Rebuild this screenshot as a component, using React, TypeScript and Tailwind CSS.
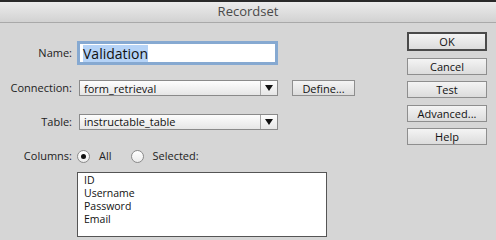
import React from "react";

const font = { fontFamily: '"Open Sans", "DejaVu Sans", sans-serif' };

function Select({ value }: { value: string }) {
  return (
    <div className="flex h-[16px] w-[199px] items-stretch border border-[#8a8a8a] bg-gradient-to-b from-[#fdfdfd] to-[#e6e6e6] text-[11px] leading-none text-[#111]">
      <div className="flex flex-1 items-center pl-[4px]">{value}</div>
      <div className="flex w-[17px] items-center justify-center border-l border-[#a8a8a8]">
        <svg width="8" height="6" viewBox="0 0 8 6"><path d="M0 0H8L4 6Z" fill="#111" /></svg>
      </div>
    </div>
  );
}

function Btn({ label, def }: { label: string; def?: boolean }) {
  return (
    <div
      className={
        "flex items-center justify-center bg-gradient-to-b from-[#f4f4f4] to-[#dcdcdc] text-[11px] leading-none text-[#111] " +
        (def ? "h-[19px] border-2 border-[#4a4a4a]" : "h-[17px] border border-[#8e8e8e]")
      }
    >
      {label}
    </div>
  );
}

function Radio({ on }: { on?: boolean }) {
  return (
    <div className="flex h-[13px] w-[13px] items-center justify-center rounded-full border border-[#8a8a8a] bg-gradient-to-b from-[#ffffff] to-[#ececec]">
      {on && <div className="h-[5px] w-[5px] rounded-full bg-[#111]" />}
    </div>
  );
}

export default function App() {
  return (
    <div className="h-[240px] w-[496px] overflow-hidden bg-[#d6d6d6]" style={font}>
      <div className="flex h-[23px] items-center justify-center border-t-2 border-b border-t-[#2a2a2a] border-b-[#a9a9a9] bg-gradient-to-b from-[#ececec] to-[#d2d2d2] text-[13px] text-[#4a4a4a]">
        Recordset
      </div>
      <div className="flex">
        <div className="flex flex-col">
          <div className="mt-[18px] flex items-center">
            <div className="w-[72px] text-right text-[11px] text-[#222]">Name:</div>
            <div className="ml-[5px] flex h-[24px] w-[201px] items-center border-[3px] border-[#86a9d1] bg-white pl-[3px]">
              <span className="bg-[#b5d3f7] text-[14px] leading-[17px] text-[#111]">Validation</span>
            </div>
          </div>
          <div className="mt-[15px] flex items-center">
            <div className="w-[72px] text-right text-[11px] text-[#222]">Connection:</div>
            <div className="ml-[7px]"><Select value="form_retrieval" /></div>
            <div className="ml-[14px] flex h-[16px] w-[63px] items-center justify-center border border-[#8e8e8e] bg-gradient-to-b from-[#f4f4f4] to-[#dcdcdc] text-[11px] leading-none text-[#111]">
              Define...
            </div>
          </div>
          <div className="mt-[17px] flex items-center">
            <div className="w-[72px] text-right text-[11px] text-[#222]">Table:</div>
            <div className="ml-[7px]"><Select value="instructable_table" /></div>
          </div>
          <div className="mt-[19px] flex h-[14px] items-center text-[11px] text-[#222]">
            <div className="w-[72px] text-right">Columns:</div>
            <div className="ml-[5px]"><Radio on /></div>
            <div className="ml-[9px]">All</div>
            <div className="ml-[19px]"><Radio /></div>
            <div className="ml-[9px]">Selected:</div>
          </div>
          <div className="ml-[77px] mt-[9px] flex h-[65px] w-[250px] flex-col border border-[#555] bg-white px-[6px] pt-[1px] text-[10.5px] leading-[13px] text-[#111]">
            <div>ID</div>
            <div>Username</div>
            <div>Password</div>
            <div>Email</div>
          </div>
        </div>
        <div className="ml-[52px] mt-[9px] flex w-[80px] flex-col">
          <Btn label="OK" def />
          <div className="mt-[7px]"><Btn label="Cancel" /></div>
          <div className="mt-[6px]"><Btn label="Test" /></div>
          <div className="mt-[7px]"><Btn label="Advanced..." /></div>
          <div className="mt-[6px]"><Btn label="Help" /></div>
        </div>
      </div>
    </div>
  );
}
